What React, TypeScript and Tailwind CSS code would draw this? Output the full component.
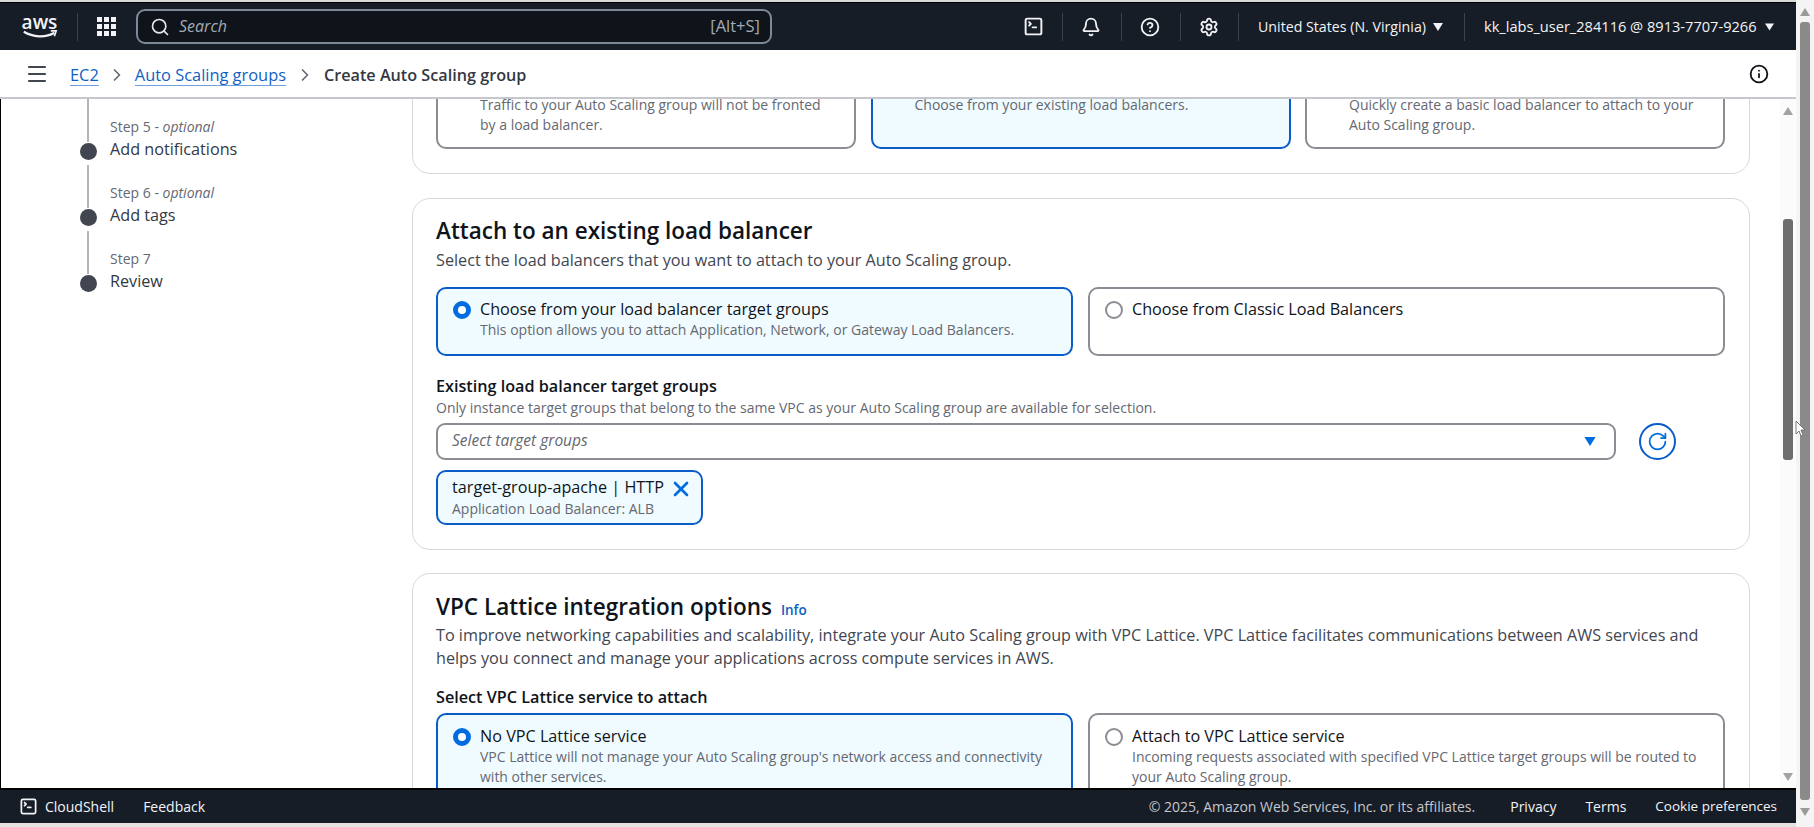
import React from 'react';
import { Bell, ChevronRight, CircleHelp, Info, Menu, RotateCw, Search, Settings, SquareTerminal, X } from 'lucide-react';

const font = "font-['Open_Sans','Noto_Sans',sans-serif]";

function Triangle({ className, down = true }: { className: string; down?: boolean }) {
  return (
    <svg viewBox="0 0 10 8" className={className} fill="currentColor">
      <polygon points={down ? '0,0 10,0 5,8' : '0,8 10,8 5,0'} />
    </svg>
  );
}

function Divider() {
  return <div className="h-[28px] w-px bg-[#3b4350]" />;
}

function TopNav() {
  return (
    <div className="flex h-[47px] shrink-0 items-center bg-[#161d26] text-[#f3f3f7]">
      <div className="flex w-[78px] shrink-0 items-center justify-center border-r border-[#3b4350] h-[28px]">
        <div className="flex flex-col items-center ml-[2px]">
          <span className="text-[19px] leading-[16px] font-semibold">aws</span>
          <svg viewBox="0 0 40 10" className="h-[9px] w-[38px] text-[#f3f3f7]" fill="none" stroke="currentColor" strokeWidth="2.4">
            <path d="M2 2c10 6 24 7 34 1" />
            <path d="M32 1l6 0-2 6" strokeWidth="1.8" />
          </svg>
        </div>
      </div>
      <div className="ml-[19px] grid w-[19px] grid-cols-3 gap-[2px]">
        {Array.from({ length: 9 }).map((_, i) => (
          <span key={i} className="h-[5px] w-[5px] bg-[#f3f3f7]" />
        ))}
      </div>
      <div className="ml-[20px] flex h-[35px] w-[636px] items-center rounded-[9px] border-2 border-[#7d8998] bg-[#0f141a] pl-[12px] pr-[10px]">
        <Search className="h-[20px] w-[20px] text-[#e5e7eb]" strokeWidth={2} />
        <span className="ml-[9px] -mt-[1px] text-[16px] italic text-[#a4abb5]">Search</span>
        <span className="ml-auto -mt-[1px] text-[16.5px] text-[#a4abb5]">[Alt+S]</span>
      </div>
      <div className="ml-[251px] flex items-center">
        <SquareTerminal className="h-[21px] w-[21px]" strokeWidth={2.2} />
        <div className="ml-[18px]"><Divider /></div>
        <Bell className="ml-[18px] h-[20px] w-[20px]" strokeWidth={2.2} />
        <div className="ml-[20px]"><Divider /></div>
        <CircleHelp className="ml-[18px] h-[20px] w-[20px]" strokeWidth={2.2} />
        <div className="ml-[20px]"><Divider /></div>
        <Settings className="ml-[18px] h-[20px] w-[20px]" strokeWidth={2.2} />
        <div className="ml-[19px]"><Divider /></div>
        <span className="ml-[19px] w-[169px] text-[14.2px] whitespace-nowrap">United States (N. Virginia)</span>
        <Triangle className="ml-[6px] h-[8px] w-[10px]" />
        <div className="ml-[21px]"><Divider /></div>
        <span className="ml-[19px] w-[274px] text-[14.6px] whitespace-nowrap">kk_labs_user_284116 @ 8913-7707-9266</span>
        <Triangle className="ml-[7px] h-[8px] w-[9px]" />
      </div>
    </div>
  );
}

function Breadcrumbs() {
  return (
    <div className="flex h-[49px] shrink-0 items-center border-b-2 border-[#c6c6cd] bg-white pl-[28px] pr-[27px] pt-[3px] text-[16.4px] text-[#0f141a]">
      <Menu className="-ml-[3px] -mt-[2px] h-[24px] w-[24px] text-[#424650]" strokeWidth={2.2} />
      <a className="ml-[21px] text-[#0f5fc4] underline decoration-[#0f5fc4]/60 underline-offset-4">EC2</a>
      <ChevronRight className="mx-[8px] h-[20px] w-[20px] text-[#656871]" />
      <a className="text-[#0f5fc4] underline decoration-[#0f5fc4]/60 underline-offset-4">Auto Scaling groups</a>
      <ChevronRight className="mx-[9px] h-[20px] w-[20px] text-[#656871]" />
      <span className="text-[16.2px] font-semibold text-[#333843]">Create Auto Scaling group</span>
      <Info className="ml-auto -mt-[2px] h-[20px] w-[20px] text-[#0f141a]" strokeWidth={2.2} />
    </div>
  );
}

function Step({ step, optional, title }: { step: string; optional?: boolean; title: string }) {
  return (
    <div className="flex h-[66px]">
      <div className="flex w-[30px] flex-col items-center">
        <div className="h-[43px] w-[2px] bg-[#b4b4bb]" />
        <div className="mt-[1px] h-[17px] w-[17px] shrink-0 rounded-full bg-[#424650]" />
      </div>
      <div className="ml-[7px] pt-[18px]">
        <div className="text-[14px] leading-[20px] text-[#656871]">
          {step}
          {optional && (
            <>
              {' - '}
              <i>optional</i>
            </>
          )}
        </div>
        <div className="text-[16.2px] leading-[24px] text-[#333843]">{title}</div>
      </div>
    </div>
  );
}

function Radio({ checked }: { checked?: boolean }) {
  return checked ? (
    <span className="mt-[3px] block h-[18px] w-[18px] shrink-0 rounded-full border-[5px] border-[#006ce0] bg-white" />
  ) : (
    <span className="mt-[3px] block h-[18px] w-[18px] shrink-0 rounded-full border-2 border-[#8c8c94] bg-white" />
  );
}

function Tile({
  title,
  desc,
  selected,
  className,
}: {
  title?: string;
  desc?: string;
  selected?: boolean;
  className: string;
}) {
  return (
    <div
      className={`flex rounded-[10px] pl-[15px] pr-[20px] ${className} ${
        selected ? 'border-2 border-[#0a5cc8] bg-[#f0fbff]' : 'border-2 border-[#8c8c94] bg-white'
      }`}
    >
      <Radio checked={selected} />
      <div className="ml-[9px]">
        <div className="h-[22px] text-[16.2px] leading-[22px] text-[#0f141a]">{title}</div>
        {desc && <div className="text-[14px] leading-[20px] text-[#656871]">{desc}</div>}
      </div>
    </div>
  );
}

function Card({ children, className = '' }: { children: React.ReactNode; className?: string }) {
  return (
    <div className={`shrink-0 rounded-[18px] border border-[#d8d8dc] bg-white pl-[23px] pr-[24px] ${className}`}>{children}</div>
  );
}

function Content() {
  return (
    <div className="flex min-h-0 w-[1338px] flex-col overflow-hidden">
      <div className="-mt-[59px] flex flex-col gap-[24px]">
        {/* scrolled: titles of this row sit above the fold */}
        <Card className="pt-[21px] pb-[24px]">
          <div className="grid grid-cols-3 gap-[14.5px]">
            <Tile className="h-[87px] pt-[9px]" desc="Traffic to your Auto Scaling group will not be fronted by a load balancer." />
            <Tile className="h-[87px] pt-[9px]" selected desc="Choose from your existing load balancers." />
            <Tile className="h-[87px] pt-[9px]" desc="Quickly create a basic load balancer to attach to your Auto Scaling group." />
          </div>
        </Card>

        <Card className="pt-[18px] pb-[24px]">
          <h2 className="text-[22.5px] leading-[28px] font-semibold text-[#0f141a]">Attach to an existing load balancer</h2>
          <p className="mt-[4px] text-[16.2px] leading-[22px] text-[#424650]">
            Select the load balancers that you want to attach to your Auto Scaling group.
          </p>
          <div className="mt-[16px] grid grid-cols-2 gap-[15px]">
            <Tile
              className="h-[69px] pt-[9px]"
              selected
              title="Choose from your load balancer target groups"
              desc="This option allows you to attach Application, Network, or Gateway Load Balancers."
            />
            <Tile className="h-[69px] pt-[9px]" title="Choose from Classic Load Balancers" />
          </div>
          <div className="mt-[19px] text-[16.2px] leading-[22px] font-semibold text-[#0f141a]">
            Existing load balancer target groups
          </div>
          <div className="text-[14px] leading-[22px] text-[#656871]">
            Only instance target groups that belong to the same VPC as your Auto Scaling group are available for selection.
          </div>
          <div className="mt-[4px] flex items-center">
            <div className="flex h-[37px] w-[1180px] items-center rounded-[9px] border-2 border-[#8c8c94] pl-[14px] pr-[18px]">
              <span className="-mt-[2px] text-[15.5px] italic text-[#656871]">Select target groups</span>
              <Triangle className="ml-auto h-[9px] w-[12px] text-[#006ce0]" />
            </div>
            <div className="ml-[23px] flex h-[37px] w-[37px] items-center justify-center rounded-full border-2 border-[#0a5cc8]">
              <RotateCw className="h-[21px] w-[21px] text-[#006ce0]" strokeWidth={2} />
            </div>
          </div>
          <div className="mt-[10px] flex h-[55px] w-[267px] items-start rounded-[10px] border-2 border-[#0a5cc8] bg-[#f0fbff] pl-[14px] pr-[8px] pt-[4px]">
            <div>
              <div className="text-[16.2px] leading-[22px] whitespace-nowrap text-[#0f141a]">target-group-apache | HTTP</div>
              <div className="text-[14px] leading-[21px] text-[#656871]">Application Load Balancer: ALB</div>
            </div>
            <X className="ml-auto mt-[1px] h-[24px] w-[24px] shrink-0 text-[#006ce0]" strokeWidth={2.6} />
          </div>
        </Card>

        <Card className="-mt-[1px] pt-[19px]">
          <h2 className="flex items-baseline text-[22.5px] leading-[28px] font-semibold text-[#0f141a]">
            VPC Lattice integration options
            <a className="ml-[9px] text-[13.5px] font-semibold text-[#0f5fc4]">Info</a>
          </h2>
          <p className="text-[16.2px] leading-[23px] text-[#424650]">
            To improve networking capabilities and scalability, integrate your Auto Scaling group with VPC Lattice. VPC
            Lattice facilitates communications between AWS services and
            <br />
            helps you connect and manage your applications across compute services in AWS.
          </p>
          <div className="mt-[16px] text-[16.2px] leading-[22px] font-semibold text-[#0f141a]">
            Select VPC Lattice service to attach
          </div>
          <div className="mt-[5px] grid grid-cols-2 gap-[15px]">
            <Tile
              className="h-[102px] pt-[10px]"
              selected
              title="No VPC Lattice service"
              desc="VPC Lattice will not manage your Auto Scaling group's network access and connectivity with other services."
            />
            <Tile
              className="h-[102px] pt-[10px]"
              title="Attach to VPC Lattice service"
              desc="Incoming requests associated with specified VPC Lattice target groups will be routed to your Auto Scaling group."
            />
          </div>
        </Card>
      </div>
    </div>
  );
}

function InnerScrollbar() {
  return (
    <div className="ml-auto mr-[1px] flex w-[15px] flex-col items-center bg-[#fbfbfb]">
      <Triangle down={false} className="mt-[8px] h-[8px] w-[10px] text-[#a3a3a3]" />
      <div className="mt-[104px] h-[241px] w-[10px] rounded-[3px] bg-[#6e6e6e]" />
      <Triangle className="mt-auto mb-[7px] h-[8px] w-[10px] text-[#a3a3a3]" />
    </div>
  );
}

function Footer() {
  return (
    <div className="flex h-[35px] shrink-0 items-center border-t-2 border-black bg-[#161d26] pl-[19px] pr-[19px] text-[14px] text-[#f3f3f7]">
      <SquareTerminal className="h-[19px] w-[19px]" strokeWidth={2.2} />
      <span className="ml-[7px]">CloudShell</span>
      <span className="ml-[29px]">Feedback</span>
      <span className="ml-auto text-[#c6c6cd]">© 2025, Amazon Web Services, Inc. or its affiliates.</span>
      <span className="ml-[35px]">Privacy</span>
      <span className="ml-[29px]">Terms</span>
      <span className="ml-[29px] text-[13.5px]">Cookie preferences</span>
    </div>
  );
}

export default function App() {
  return (
    <div className={`relative flex h-[827px] w-[1814px] overflow-hidden bg-white ${font}`}>
      <div className="flex w-[1796px] shrink-0 flex-col">
        <div className="h-[3px] shrink-0 border-b border-black bg-[#d9d9d9]" />
        <TopNav />
        <Breadcrumbs />
        <div className="flex min-h-0 flex-1 border-l border-black">
          <div className="w-[411px] shrink-0 pl-[72px]">
            <Step step="Step 5" optional title="Add notifications" />
            <Step step="Step 6" optional title="Add tags" />
            <Step step="Step 7" title="Review" />
          </div>
          <Content />
          <InnerScrollbar />
        </div>
        <Footer />
        <div className="h-[4px] shrink-0 bg-[#e6e2e2]" />
      </div>
      <div className="flex flex-1 flex-col items-center bg-[#f4f4f4] px-[4px]">
        <Triangle down={false} className="mt-[8px] h-[8px] w-[10px] text-[#9a9a9a]" />
        <div className="mt-[6px] h-[778px] w-[10px] rounded-[3px] bg-[#8a8a8a]" />
        <Triangle className="mt-[8px] h-[8px] w-[10px] text-[#9a9a9a]" />
      </div>
      {/* mouse pointer from the recording */}
      <svg viewBox="0 0 12 18" className="absolute left-[1795px] top-[420px] h-[18px] w-[12px]">
        <path d="M1 1v13l3-3 2 5 2-1-2-5h4z" fill="#ffffff" stroke="#777777" strokeWidth="1" />
      </svg>
    </div>
  );
}
